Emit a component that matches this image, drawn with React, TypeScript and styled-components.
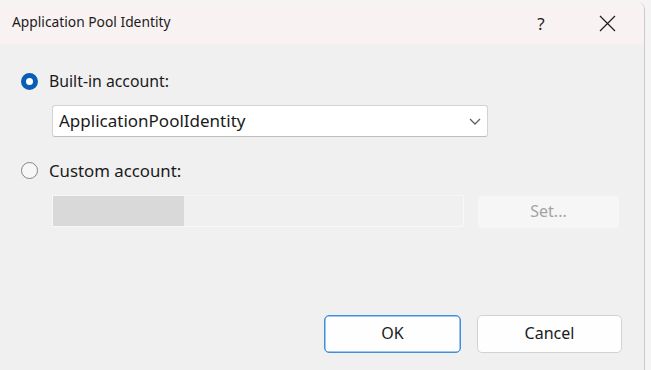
import React from 'react';
import styled, { createGlobalStyle } from 'styled-components';

const GlobalStyle = createGlobalStyle`
	html, body {
		margin: 0;
		padding: 0;
		background: #f4f4f4;
		font-family: "Noto Sans", "Open Sans", sans-serif;
		color: #1a1a1a;
	}
	#root {
		height: 370px;
		overflow: hidden;
	}
`;

const Window = styled.div`
	width: 644px;
	height: 380px;
	margin-top: 2px;
	background: #f0f0f0;
	border-right: 1px solid #c9c9c9;
	border-top-right-radius: 8px;
	border-top-left-radius: 8px;
	overflow: hidden;
	display: flex;
	flex-direction: column;
`;

const TitleBar = styled.div`
	height: 42px;
	flex: none;
	display: flex;
	align-items: center;
	padding: 0 4px 0 12px;
	background: #f9f2f2;
`;

const Title = styled.div`
	flex: 1;
	font-size: 13.8px;
	color: #1c1c1c;
	padding-bottom: 3px;
`;

const TitleButton = styled.button`
	width: 66px;
	height: 42px;
	border: 0;
	padding: 0;
	background: transparent;
	display: flex;
	align-items: center;
	justify-content: center;
	font-family: inherit;
	font-size: 17px;
	color: #1c1c1c;
`;

const Body = styled.div`
	flex: 1;
	padding: 25px 0 0 0;
	display: flex;
	flex-direction: column;
`;

const RadioRow = styled.label<{ $top?: number; $size: number }>`
	display: flex;
	align-items: center;
	height: 24px;
	margin-top: ${({ $top }) => $top ?? 0}px;
	padding-left: 21px;
	gap: 11px;
	font-size: ${({ $size }) => $size}px;
	color: #1a1a1a;
`;

const RadioCircle = styled.span<{ $checked?: boolean }>`
	box-sizing: border-box;
	width: 17px;
	height: 17px;
	border-radius: 50%;
	flex: none;
	${({ $checked }) =>
		$checked
			? `
		background: #ffffff;
		border: 5px solid #0a5eb5;
	`
			: `
		background: #f7f7f7;
		border: 1.5px solid #858585;
	`}
`;

const Indented = styled.div<{ $top: number }>`
	margin: ${({ $top }) => $top}px 0 0 52px;
	display: flex;
	align-items: flex-start;
	gap: 13px;
`;

const Select = styled.div`
	box-sizing: border-box;
	width: 436px;
	height: 32px;
	background: #ffffff;
	border: 1px solid #d3d3d3;
	border-bottom-color: #bdbdbd;
	border-radius: 3px;
	display: flex;
	align-items: center;
	padding: 0 6px 0 6px;
	font-size: 17px;
	color: #1a1a1a;
`;

const SelectValue = styled.span`
	flex: 1;
	padding-bottom: 1px;
`;

const TextBox = styled.div`
	box-sizing: border-box;
	width: 412px;
	height: 32px;
	background: #f0f0f0;
	border: 1px solid #f8f8f8;
	border-top-color: #f6f6f6;
	border-radius: 2px;
	display: flex;
	align-items: stretch;
`;

const Redacted = styled.div`
	width: 131px;
	background: #d9d9d9;
	filter: blur(0.6px);
`;

const Button = styled.button<{ $primary?: boolean; $disabled?: boolean }>`
	box-sizing: border-box;
	font-family: inherit;
	font-size: 16px;
	border-radius: 5px;
	padding: 0 0 2px 0;
	background: ${({ $disabled }) => ($disabled ? '#f6f6f6' : '#fefefe')};
	color: ${({ $disabled }) => ($disabled ? '#a3a3a3' : '#1a1a1a')};
	border: 1px solid
		${({ $primary, $disabled }) =>
			$primary ? '#3f8fdc' : $disabled ? '#f1f1f1' : '#d2d2d2'};
	box-shadow: ${({ $primary }) =>
		$primary ? 'inset 0 0 0 0.5px #3f8fdc' : 'none'};
`;

const SetButton = styled(Button)`
	width: 143px;
	height: 34px;
`;

const Footer = styled.div`
	margin-top: 86px;
	display: flex;
	justify-content: flex-end;
	gap: 16px;
	padding-right: 22px;
`;

const DialogButton = styled(Button)`
	width: ${({ $primary }) => ($primary ? 137 : 145)}px;
	height: 38px;
`;

const CloseIcon = () => (
	<svg width="17" height="17" viewBox="0 0 17 17" fill="none">
		<path d="M1 1 L16 16 M16 1 L1 16" stroke="#1c1c1c" strokeWidth="1.2" />
	</svg>
);

const Chevron = () => (
	<svg width="12" height="7" viewBox="0 0 12 7" fill="none">
		<path d="M1 1 L6 6 L11 1" stroke="#5f5f5f" strokeWidth="1.3" />
	</svg>
);

const App = () => (
	<>
		<GlobalStyle />
		<Window>
			<TitleBar>
				<Title>Application Pool Identity</Title>
				<TitleButton>?</TitleButton>
				<TitleButton>
					<CloseIcon />
				</TitleButton>
			</TitleBar>
			<Body>
				<RadioRow $size={15.8}>
					<RadioCircle $checked />
					Built-in account:
				</RadioRow>
				<Indented $top={12}>
					<Select>
						<SelectValue>ApplicationPoolIdentity</SelectValue>
						<Chevron />
					</Select>
				</Indented>
				<RadioRow $top={21} $size={16.8}>
					<RadioCircle />
					Custom account:
				</RadioRow>
				<Indented $top={13}>
					<TextBox>
						<Redacted />
					</TextBox>
					<SetButton $disabled>Set...</SetButton>
				</Indented>
				<Footer>
					<DialogButton $primary>OK</DialogButton>
					<DialogButton>Cancel</DialogButton>
				</Footer>
			</Body>
		</Window>
	</>
);

export default App;
